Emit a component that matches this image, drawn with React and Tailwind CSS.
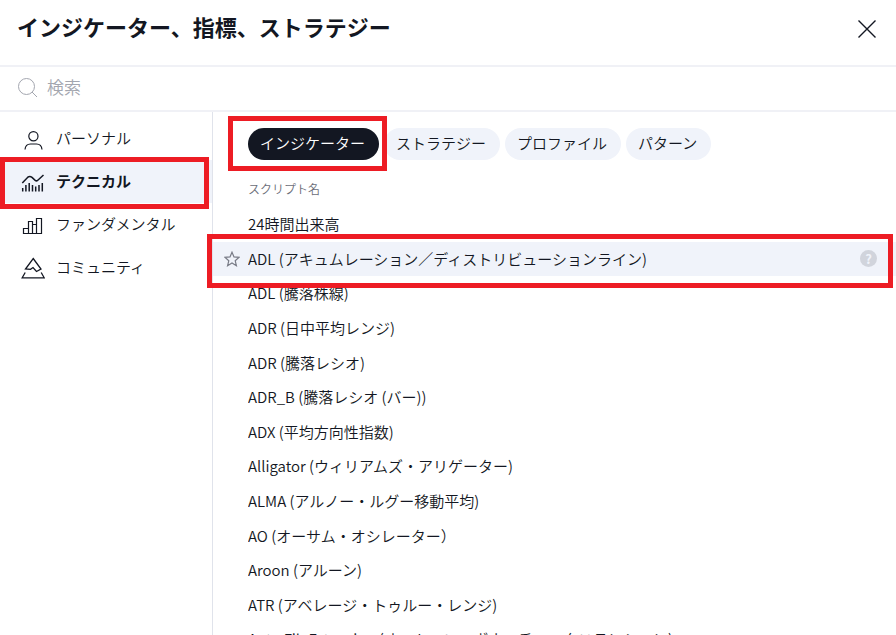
import { useState } from 'react';

const categories = [
    { id: 'personal', label: 'パーソナル', icon: PersonIcon },
    { id: 'technical', label: 'テクニカル', icon: TechnicalIcon },
    { id: 'fundamental', label: 'ファンダメンタル', icon: FundamentalIcon },
    { id: 'community', label: 'コミュニティ', icon: CommunityIcon },
];

const tabs = ['インジケーター', 'ストラテジー', 'プロファイル', 'パターン'];

const scripts = [
    '24時間出来高',
    'ADL (アキュムレーション／ディストリビューションライン)',
    'ADL (騰落株線)',
    'ADR (日中平均レンジ)',
    'ADR (騰落レシオ)',
    'ADR_B (騰落レシオ (バー))',
    'ADX (平均方向性指数)',
    'Alligator (ウィリアムズ・アリゲーター)',
    'ALMA (アルノー・ルグー移動平均)',
    'AO (オーサム・オシレーター）',
    'Aroon (アルーン)',
    'ATR (アベレージ・トゥルー・レンジ)',
    'Auto Fib Extension (オート・フィボナッチ・エクステンション)',
];

function PersonIcon() {
    return (
        <svg width="24" height="24" viewBox="0 0 24 24" fill="none" stroke="currentColor" strokeWidth="1.2" aria-hidden="true">
            <circle cx="12.4" cy="9.2" r="4.6" />
            <path d="M4 22.5c.3-3.500 2.300-5.500 5.500-5.500h6c3.200 0 5.200 2 5.500 5.500" />
        </svg>
    );
}

function TechnicalIcon() {
    return (
        <svg width="24" height="24" viewBox="0 0 24 24" fill="none" stroke="currentColor" strokeWidth="1.500" aria-hidden="true">
            <path d="M1.300 13l5.700-6q2-1.200 4 .4l3.200 3q1.300 1 2.600-.2l5.700-5.200" />
            <path d="M1.700 21.500v-3.500M4.900 21.500v-6.500M8.200 21.500v-8.500M11.500 21.500v-6.500M14.700 21.500v-5M18 21.500v-6.500M21.300 21.500v-8.500" />
        </svg>
    );
}

function FundamentalIcon() {
    return (
        <svg width="24" height="24" viewBox="0 0 24 24" fill="none" stroke="currentColor" strokeWidth="1.2" aria-hidden="true">
            <path d="M2.500 15.500h5v5h-5zM7.500 8.500h4v12h-4zM11.500 11.500h4v9h-4zM15.500 5.500h5v15h-5z" />
        </svg>
    );
}

function CommunityIcon() {
    return (
        <svg width="24" height="24" viewBox="0 0 24 24" fill="none" stroke="currentColor" strokeWidth="1.300" aria-hidden="true">
            <path d="M12.200 2.500l7.800 10.500-4.500 2.500-3.500-4-2.500 1.800-5-.3z" />
            <path d="M4.200 16.500l-3 5.300h22l-3-5.300" />
        </svg>
    );
}

function SearchIcon() {
    return (
        <svg width="20" height="20" viewBox="0 0 20 20" fill="none" stroke="currentColor" aria-hidden="true">
            <circle cx="8.500" cy="8.500" r="8" />
            <path d="M14 14l5 5" />
        </svg>
    );
}

function StarIcon() {
    return (
        <svg width="16" height="16" viewBox="0 0 16 16" fill="none" stroke="currentColor" strokeWidth="1.2" aria-hidden="true">
            <path d="M8 1.200l2 4.700 5.100.4-3.900 3.400 1.200 5L8 12l-4.400 2.700 1.200-5L.9 6.300 6 5.900z" />
        </svg>
    );
}

function App() {
    const [category, setCategory] = useState('technical');
    const [tab, setTab] = useState(tabs[0]);

    return (
        <div className="flex h-screen flex-col overflow-hidden bg-white font-['Noto_Sans_CJK_JP',sans-serif] text-[15px] font-[350] text-[#131722]">
            {/* Title bar */}
            <header className="flex h-[67px] shrink-0 items-center justify-between border-b-2 border-[#f0f1f6] pr-5 pb-2 pl-[17px]">
                <h1 className="pb-[6px] text-[22px] leading-8 font-bold">インジケーター、指標、ストラテジー</h1>
                <button type="button" aria-label="閉じる">
                    <svg width="18" height="18" viewBox="0 0 18 18" stroke="currentColor" strokeWidth="1.400" aria-hidden="true">
                        <path d="M.5.5l17 17M17.500.5l-17 17" />
                    </svg>
                </button>
            </header>

            {/* Search */}
            <label className="flex h-[45px] shrink-0 items-center gap-[9px] border-b-2 border-[#f0f1f6] pb-[2px] pl-[18px] text-[#a3a6af]">
                <SearchIcon />
                <input
                    type="text"
                    aria-label="検索"
                    placeholder="検索"
                    className="min-w-0 flex-1 pb-[2px] text-[17px] leading-6 outline-none placeholder:text-[#a3a6af]"
                />
            </label>

            <div className="flex min-h-0 flex-1">
                {/* Categories */}
                <nav className="w-[213px] shrink-0 border-r border-[#e0e3eb] pt-[5px]">
                    {categories.map(({ id, label, icon: Icon }) => (
                        <button
                            key={id}
                            type="button"
                            onClick={() => setCategory(id)}
                            className={`relative flex h-[43px] w-full items-center gap-[11px] pl-[21px] ${id === category ? 'bg-[#f0f3fa] font-bold' : ''}`}
                        >
                            <Icon />
                            {label}
                            {id === 'technical' && (
                                <span className="pointer-events-none absolute -top-[3px] right-[3px] -bottom-[6px] left-0 border-[5px] border-[#ed1c24]" />
                            )}
                        </button>
                    ))}
                </nav>

                <main className="min-w-0 flex-1 pt-4">
                    <div className="flex gap-[5px] pl-[35px]">
                        {tabs.map((name) => (
                            <div key={name} className="relative">
                                <button
                                    type="button"
                                    onClick={() => setTab(name)}
                                    className={`h-8 rounded-full pr-[14px] pb-[2px] pl-3 whitespace-nowrap ${name === tab ? 'bg-[#131722] text-white' : 'bg-[#f0f3fa]'}`}
                                >
                                    {name}
                                </button>
                                {name === 'インジケーター' && (
                                    <span className="pointer-events-none absolute -top-3 -right-2 -bottom-[11px] -left-5 z-10 border-[5px] border-[#ed1c24]" />
                                )}
                            </div>
                        ))}
                    </div>

                    <h2 className="mt-[19px] pl-[35px] text-xs leading-5 text-[#6a6d78]">スクリプト名</h2>

                    {/* Script list */}
                    <ul className="mt-2 grid h-[450px] auto-rows-fr">
                        {scripts.map((name, i) => (
                            <li key={name} className={`relative flex items-center pr-[19px] ${i === 1 ? 'bg-[#f0f3fa]' : ''}`}>
                                <span className="flex w-[35px] shrink-0 pl-[11px] text-[#787b86]">
                                    {i === 1 && (
                                        <button type="button" aria-label="お気に入り">
                                            <StarIcon />
                                        </button>
                                    )}
                                </span>
                                <span className="flex-1 truncate">{name}</span>
                                {i === 1 && (
                                    <>
                                        <button
                                            type="button"
                                            aria-label="ヘルプ"
                                            className="size-[17px] rounded-full bg-[#d1d4dc] text-[13px] leading-[17px] font-bold text-[#f0f3fa]"
                                        >
                                            ?
                                        </button>
                                        <span className="pointer-events-none absolute -top-2 right-[3px] -bottom-3 -left-[6px] z-10 border-[5px] border-[#ed1c24]" />
                                    </>
                                )}
                            </li>
                        ))}
                    </ul>
                </main>
            </div>
        </div>
    );
}

export default App;
